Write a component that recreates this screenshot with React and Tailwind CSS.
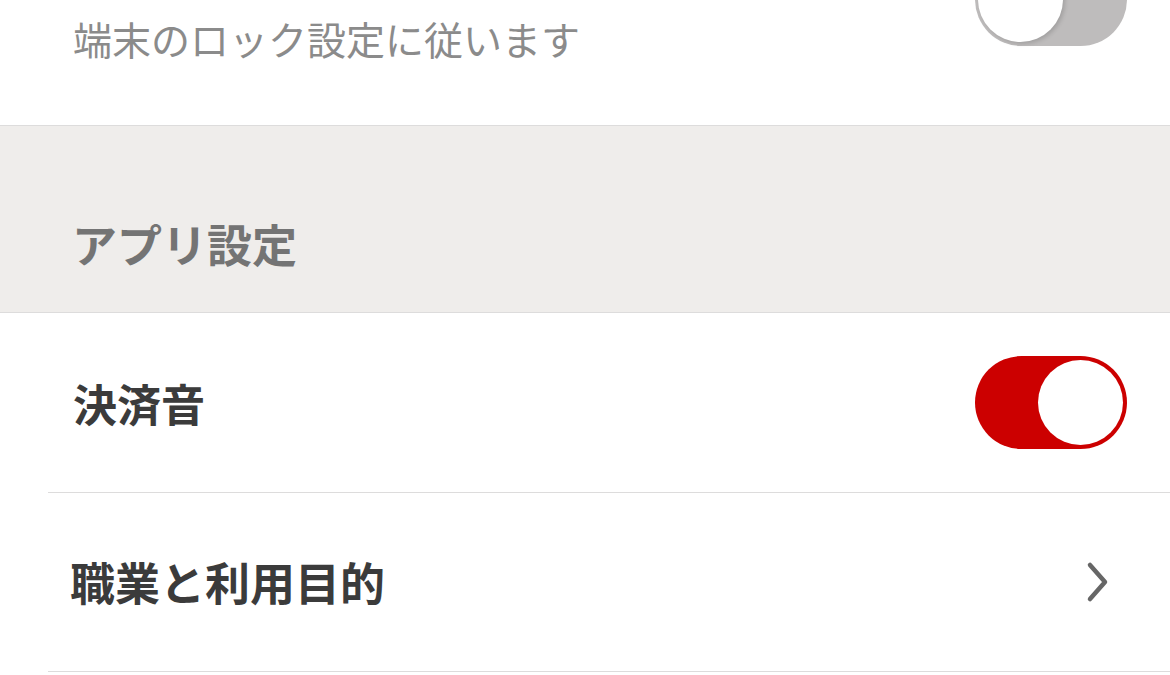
function Toggle({ on, className = '' }) {
  return (
    <div
      className={`relative w-[152px] h-[93px] rounded-full shrink-0 ${
        on ? 'bg-[#cc0000]' : 'bg-[#bebcbc]'
      } ${className}`}
    >
      <div
        className={`absolute top-[4px] w-[85px] h-[85px] rounded-full bg-white ${
          on ? 'right-[4px]' : 'left-[3px] shadow-[2px_2px_4px_rgba(0,0,0,0.15)]'
        }`}
      />
    </div>
  );
}

function Chevron() {
  return (
    <svg width="26" height="42" viewBox="0 0 26 42" fill="none" className="shrink-0">
      <path
        d="M5 4 L20 21 L5 38"
        stroke="#666666"
        strokeWidth="4.5"
        strokeLinecap="round"
        strokeLinejoin="round"
      />
    </svg>
  );
}

export default function App() {
  return (
    <div
      className="w-[1170px] h-[675px] overflow-hidden bg-white"
      style={{ fontFamily: '"Noto Sans CJK JP", "Noto Sans", sans-serif' }}
    >
      <div className="h-[126px] flex items-start justify-between border-b border-[#dddcdc] pr-[43px]">
        <p className="pl-[73px] pt-[11px] text-[39px] leading-[54px] text-[#8b8b8b]">
          端末のロック設定に従います
        </p>
        <Toggle on={false} className="-mt-[47px]" />
      </div>

      <div className="h-[187px] bg-[#efedeb] border-b border-[#dddcdc] flex items-end pl-[72px] pb-[38px]">
        <h2 className="text-[45px] leading-[60px] font-bold text-[#747474]">アプリ設定</h2>
      </div>

      <div className="h-[179px] flex items-center justify-between pl-[73px] pr-[43px]">
        <span className="text-[44px] leading-[60px] font-bold text-[#3b3b3b]">決済音</span>
        <Toggle on />
      </div>

      <div className="ml-[48px] border-t border-b border-[#dddcdc] h-[180px] flex items-center justify-between pl-[22px] pr-[59px]">
        <span className="text-[45px] leading-[60px] font-bold text-[#3b3b3b]">職業と利用目的</span>
        <Chevron />
      </div>
    </div>
  );
}
